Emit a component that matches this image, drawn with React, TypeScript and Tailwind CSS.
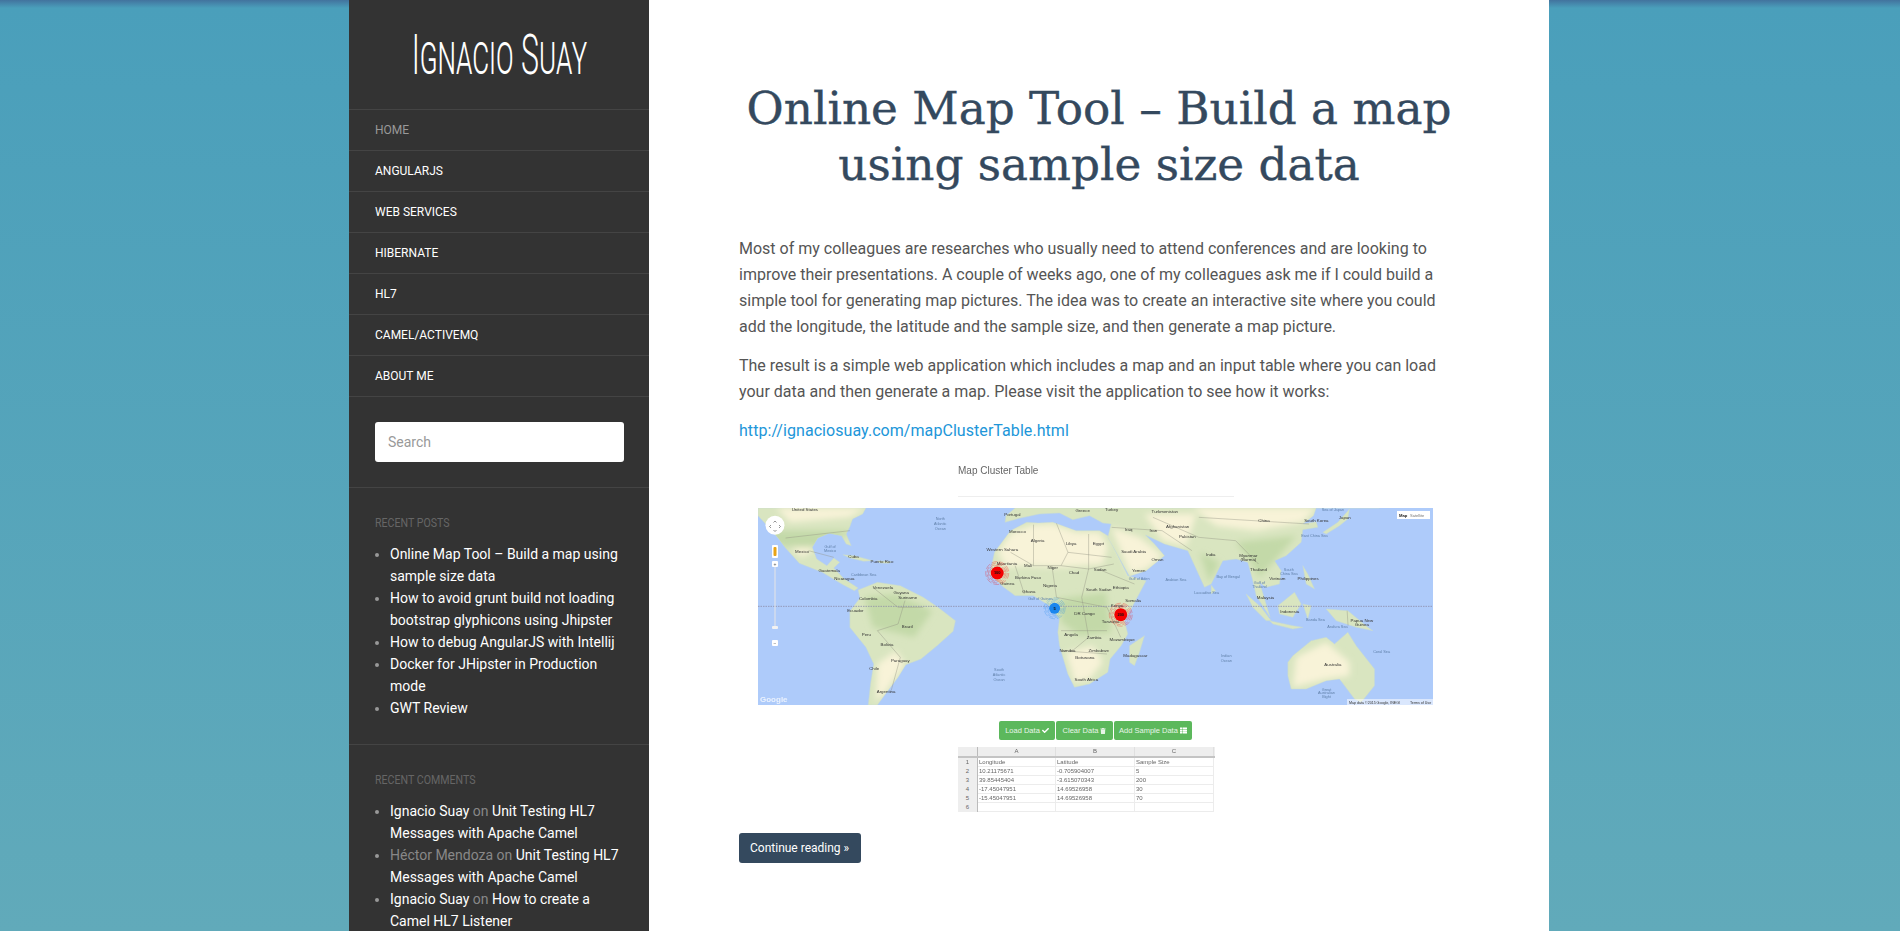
import { FaCheck, FaTrash, FaThList } from 'react-icons/fa';

const nav = ['Home', 'AngularJS', 'Web Services', 'Hibernate', 'HL7', 'Camel/ActiveMQ', 'About Me'];

const recentPosts = [
  'Online Map Tool – Build a map using sample size data',
  'How to avoid grunt build not loading bootstrap glyphicons using Jhipster',
  'How to debug AngularJS with Intellij',
  'Docker for JHipster in Production mode',
  'GWT Review',
];

const rows = [
  ['Longitude', 'Latitude', 'Sample Size'],
  ['10.21175671', '-0.705904007', '5'],
  ['39.85445404', '-3.615070343', '200'],
  ['-17.45047951', '14.69526958', '30'],
  ['-15.45047951', '14.69526958', '70'],
  ['', '', ''],
];

// map coordinates are taken from crops of the screenshot, sx/sy bring them to the drawn size
const sx = 675 / 1470;
const sy = 197 / 591;
const mx = (x: number) => (x - 40) * sx;
const my = (y: number) => (y - 172) * sy;
const pts = (p: number[][]) => p.map(([x, y]) => `${mx(x)},${my(y)}`).join(' ');
// second crop, eastern half of the map
const e = (p: number[][]) => p.map(([x, y]) => [653 + 0.726 * x, 165 + y]);

const land = [
  // north america
  [[40, 172], [275, 172], [268, 190], [246, 205], [240, 228], [232, 250], [243, 285], [232, 280], [222, 255], [195, 248], [170, 262], [158, 290], [168, 325], [190, 345], [205, 322], [218, 335], [205, 352], [228, 385], [258, 412], [250, 420], [225, 402], [180, 365], [130, 338], [100, 292], [84, 262], [62, 228], [40, 195]],
  // south america
  [[258, 418], [300, 395], [350, 405], [400, 440], [432, 470], [470, 510], [465, 542], [430, 585], [395, 625], [362, 642], [345, 680], [322, 722], [300, 763], [280, 763], [285, 700], [292, 640], [275, 590], [240, 530], [240, 482], [262, 442]],
  // africa
  [[555, 305], [590, 240], [625, 215], [650, 217], ...e([[40, 50], [110, 75], [180, 75], [205, 90], [265, 210], [320, 225], [280, 300], [255, 345], [265, 385], [245, 420], [212, 460], [205, 500], [150, 535], [105, 545], [85, 505], [60, 420], [55, 380], [60, 340], [30, 300]]), [640, 435], [600, 435], [575, 410], [545, 370]],
  // europe and asia
  [[578, 215], [580, 195], [600, 172], ...e([[400, 7], [1020, 7], [830, 7], [822, 30], [790, 55], [830, 48], [835, 65], [790, 72], [785, 110], [740, 150], [705, 165], [725, 195], [720, 235], [680, 245], [660, 230], [692, 335], [650, 270], [640, 225], [625, 170], [590, 160], [550, 165], [515, 235], [495, 245], [445, 135], [375, 115], [318, 88], [345, 115], [375, 150], [320, 195], [270, 212], [205, 95], [215, 55], [190, 52], [150, 30], [100, 42], [60, 22], [0, 25], [-60, 38]])],
  // australia
  e([[745, 470], [760, 450], [815, 405], [860, 395], [885, 415], [925, 380], [950, 420], [1005, 490], [1005, 540], [965, 590], [945, 580], [900, 520], [860, 525], [800, 550], [755, 550], [745, 510]]),
  // madagascar
  e([[315, 390], [300, 440], [285, 480], [270, 470], [270, 420]]),
  // sumatra, borneo, java, sulawesi, philippines, new guinea, japan
  e([[620, 265], [665, 305], [695, 345], [680, 345], [640, 305]]),
  e([[715, 300], [765, 260], [785, 295], [760, 335], [720, 325]]),
  e([[690, 345], [760, 360], [790, 365], [760, 370], [700, 355]]),
  e([[790, 295], [815, 300], [805, 340]]),
  e([[790, 180], [805, 205], [825, 250], [800, 235]]),
  e([[860, 310], [925, 315], [985, 365], [1000, 375], [950, 365], [890, 345]]),
  e([[850, 80], [895, 50], [930, 10], [925, 40], [900, 60], [860, 85]]),
  e([[515, 238], [528, 255], [515, 265]]),
  // cuba, hispaniola
  [[225, 312], [250, 315], [290, 330], [270, 332], [240, 322]],
  [[300, 330], [330, 333], [325, 338], [305, 337]],
];

const sandAreas = [
  [[562, 305], [592, 245], [640, 222], ...e([[40, 55], [110, 80], [180, 80], [205, 120], [190, 175], [120, 180], [50, 185], [-40, 180], [-100, 185]])],
  e([[215, 65], [300, 95], [370, 150], [320, 190], [272, 205]]),
  e([[315, 25], [470, 25], [440, 120], [370, 105]]),
  e([[460, 7], [830, 7], [790, 50], [650, 75], [530, 60]]),
  e([[770, 455], [860, 410], [930, 470], [930, 510], [860, 520], [760, 545]]),
  e([[80, 440], [160, 420], [190, 470], [150, 520], [105, 530]]),
  [[80, 172], [275, 172], [240, 200], [110, 215]],
  [[110, 290], [165, 270], [160, 300], [135, 320]],
  [[300, 640], [340, 600], [360, 640], [320, 720], [296, 755]],
];

const forest = [
  e([[55, 280], [200, 260], [215, 380], [120, 390], [65, 350]]),
  [[272, 440], [340, 430], [420, 480], [380, 560], [290, 530]],
  e([[480, 140], [540, 170], [510, 230]]),
  e([[590, 110], [770, 90], [710, 160], [660, 215], [630, 165]]),
  [[250, 345], [265, 385], [225, 380]],
  [[-20, 240], [250, 240], [170, 290], [105, 290]],
];

const borders = [
  [[590, 305], [640, 345], [700, 345], [760, 355], [815, 340]],
  [[640, 222], [640, 345]],
  [[690, 218], [715, 305], [700, 345]],
  [[760, 250], [760, 355], [745, 440], [760, 560], [725, 600]],
  [[715, 305], [810, 320]],
  [[780, 355], [860, 400]],
  [[600, 345], [620, 430]],
  [[680, 345], [690, 440]],
  [[690, 440], [800, 470], [830, 560]],
  [[700, 540], [800, 540]],
  [[700, 600], [800, 610]],
  [[360, 450], [345, 520], [300, 540], [350, 620], [330, 720]],
  [[290, 410], [345, 470], [400, 470]],
  [[100, 262], [240, 240]],
  [[150, 300], [205, 320]],
  [[810, 230], [920, 240], [985, 300]],
  [[900, 200], [1000, 260], [1080, 270], [1130, 340]],
  [[1000, 200], [1240, 220]],
  [[1323, 480], [1325, 525]],
];

const labels: [number, number, string][] = [
  [142, 176, 'United States'], [594, 190, 'Portugal'], [747, 178, 'Greece'], [810, 177, 'Turkey'], [926, 183, 'Turkmenistan'], [1142, 208, 'China'], [1256, 208, 'South Korea'], [1318, 200, 'Japan'], [605, 242, 'Morocco'], [649, 270, 'Algeria'], [722, 279, 'Libya'], [781, 279, 'Egypt'], [847, 236, 'Iraq'], [901, 240, 'Iran'], [954, 226, 'Afghanistan'], [975, 256, 'Pakistan'], [136, 302, 'Mexico'], [310, 331, 'Puerto Rico'], [248, 318, 'Cuba'], [195, 359, 'Guatemala'], [228, 384, 'Nicaragua'], [312, 410, 'Venezuela'], [352, 424, 'Guyana'], [366, 440, 'Suriname'], [280, 442, 'Colombia'], [252, 478, 'Ecuador'], [276, 550, 'Peru'], [365, 526, 'Brazil'], [321, 582, 'Bolivia'], [350, 629, 'Paraguay'], [293, 654, 'Chile'], [319, 721, 'Argentina'], [572, 297, 'Western Sahara'], [582, 338, 'Mauritania'], [628, 345, 'Mali'], [682, 349, 'Niger'], [728, 366, 'Chad'], [785, 357, 'Sudan'], [858, 301, 'Saudi Arabia'], [910, 326, 'Oman'], [869, 360, 'Yemen'], [628, 381, 'Burkina Faso'], [583, 397, 'Guinea'], [630, 421, 'Ghana'], [676, 403, 'Nigeria'], [782, 417, 'South Sudan'], [830, 410, 'Ethiopia'], [857, 449, 'Somalia'], [822, 465, 'Kenya'], [808, 511, 'Tanzania'], [751, 487, 'DR Congo'], [722, 552, 'Angola'], [772, 559, 'Zambia'], [833, 567, 'Mozambique'], [714, 600, 'Namibia'], [782, 598, 'Zimbabwe'], [752, 621, 'Botswana'], [755, 687, 'South Africa'], [862, 613, 'Madagascar'], [1026, 310, 'India'], [1108, 314, 'Myanmar'], [1108, 326, '(Burma)'], [1130, 355, 'Thailand'], [1171, 382, 'Vietnam'], [1238, 382, 'Philippines'], [1145, 441, 'Malaysia'], [1198, 481, 'Indonesia'], [1355, 508, 'Papua New'], [1355, 521, 'Guinea'], [1292, 642, 'Australia'],
];

const seaLabels: [number, number, string][] = [
  [437, 203, 'North'], [437, 219, 'Atlantic'], [437, 234, 'Ocean'], [197, 286, 'Gulf of'], [197, 298, 'Mexico'], [270, 370, 'Caribbean Sea'], [655, 443, 'Gulf of Guinea'], [565, 655, 'South'], [565, 670, 'Atlantic'], [565, 686, 'Ocean'], [1060, 613, 'Indian'], [1060, 629, 'Ocean'], [950, 385, 'Arabian Sea'], [1064, 376, 'Bay of Bengal'], [1017, 425, 'Laccadive Sea'], [870, 383, 'Gulf of Aden'], [1196, 357, 'South'], [1196, 369, 'China Sea'], [1132, 396, 'Gulf of'], [1132, 408, 'Thailand'], [1254, 507, 'Banda Sea'], [1302, 526, 'Arafura Sea'], [1398, 602, 'Coral Sea'], [1278, 715, 'Great'], [1278, 726, 'Australian'], [1278, 737, 'Bight'], [1252, 253, 'East China Sea'], [1292, 176, 'Sea of Japan'],
];

function Cluster({ x, y, r, color, text }: { x: number; y: number; r: number; color: string; text: string }) {
  return (
    <g>
      {[r + 5, r + 3.6, r + 2.2, r + 1].map((rad) => (
        <circle key={rad} cx={mx(x)} cy={my(y)} r={rad} fill="none" stroke={color} strokeWidth="0.55" opacity="0.5" strokeDasharray="6 2" />
      ))}
      <circle cx={mx(x)} cy={my(y)} r={r} fill={color} />
      <text x={mx(x)} y={my(y) + 1.4} textAnchor="middle" fontSize="4" fontWeight="700" fill="#111">
        {text}
      </text>
    </g>
  );
}

function WorldMap() {
  return (
    <svg viewBox="0 0 675 197" className="block w-[675px] h-[197px]" fontFamily="'Liberation Sans', sans-serif">
      <defs>
        <filter id="soft" x="-10%" y="-10%" width="120%" height="120%">
          <feGaussianBlur stdDeviation="3" />
        </filter>
        <clipPath id="landClip">
          {land.map((p, i) => (
            <polygon key={i} points={pts(p)} />
          ))}
        </clipPath>
      </defs>
      <rect width="675" height="197" fill="#aecbfa" />
      {land.map((p, i) => (
        <polygon key={i} points={pts(p)} fill="#d9e5c0" stroke="#c4d8d4" strokeWidth="0.5" />
      ))}
      <g clipPath="url(#landClip)">
        <g filter="url(#soft)">
          {sandAreas.map((p, i) => (
            <polygon key={i} points={pts(p)} fill="#f8f3d8" />
          ))}
          {forest.map((p, i) => (
            <polygon key={i} points={pts(p)} fill="#c3d9a8" />
          ))}
        </g>
      </g>
      {borders.map((p, i) => (
        <polyline key={i} points={pts(p)} fill="none" stroke="#8f8f80" strokeWidth="0.4" />
      ))}
      <line x1="0" x2="675" y1={my(467)} y2={my(467)} stroke="#8d8ca8" strokeWidth="0.8" strokeDasharray="1.5 1" />
      {labels.map(([x, y, t]) => (
        <text key={t + x} x={mx(x)} y={my(y) + 1.5} textAnchor="middle" fontSize="4.4" fill="#333">
          {t}
        </text>
      ))}
      {seaLabels.map(([x, y, t]) => (
        <text key={t + x} x={mx(x)} y={my(y) + 1.5} textAnchor="middle" fontSize="3.8" fill="#5f7fa8">
          {t}
        </text>
      ))}
      <Cluster x={561} y={367} r={6.5} color="#f40000" text="100" />
      <Cluster x={830} y={492} r={6.5} color="#f40000" text="200" />
      <Cluster x={686} y={473} r={5.5} color="#1a86ee" text="5" />
      {/* map controls */}
      <circle cx={mx(77)} cy={my(224)} r="9.5" fill="#fff" />
      <path d="M15.5 14.5l1.5-1.5 1.5 1.5M15.5 22l1.5 1.5 1.5-1.5M13 17l-1.5 1.5 1.5 1.5M21 17l1.5 1.5-1.5 1.5" fill="none" stroke="#666" strokeWidth="0.7" />
      <rect x="14" y="37" width="6" height="13" rx="1" fill="#fff" />
      <rect x="15.5" y="39" width="3" height="9" rx="1" fill="#e8a317" />
      <rect x="14" y="53" width="6" height="6" rx="1" fill="#fff" />
      <rect x="16.5" y="59" width="1" height="62" fill="#e6e6e6" />
      <rect x="14" y="118" width="6" height="3" rx="1" fill="#f2f2f2" />
      <rect x="14" y="132" width="6" height="6" rx="1" fill="#fff" />
      <text x="17" y="58" textAnchor="middle" fontSize="5" fill="#555">+</text>
      <text x="17" y="137" textAnchor="middle" fontSize="5" fill="#555">−</text>
      <rect x="639" y="3" width="33" height="8" fill="#fff" />
      <text x="641" y="9" fontSize="4.2" fontWeight="700" fill="#222">Map</text>
      <text x="652" y="9" fontSize="4" fill="#777">Satellite</text>
      <text x="2" y="194" fontSize="8" fontWeight="700" fill="#ffffff" opacity="0.75">Google</text>
      <rect x="589" y="191" width="86" height="6" fill="#fff" opacity="0.55" />
      <text x="591" y="195.5" fontSize="3.6" fill="#333">Map data ©2015 Google, INEGI</text>
      <text x="652" y="195.5" fontSize="3.6" fill="#333">Terms of Use</text>
    </svg>
  );
}

function Figure() {
  return (
    <div className="flex flex-col h-[352px] w-[675px] mb-[20px] text-[#555] font-['Liberation_Sans',sans-serif] blur-[0.4px]">
      <div className="pl-[200px] h-[47px]">
        <div className="text-[10px] leading-[20px] text-[#666]">Map Cluster Table</div>
        <div className="mt-[15px] w-[276px] border-t border-[#eee]" />
      </div>
      <WorldMap />
      <div className="mt-[16px] ml-[241px] flex gap-[1px] text-[7.5px] leading-[18px] text-[#e8f5e8]">
        <div className="w-[56px] h-[19px] bg-[#5cb85c] rounded-[2px] flex items-center justify-center gap-[2px]">
          Load Data <FaCheck className="w-[7px] h-[7px] text-white" />
        </div>
        <div className="w-[57px] h-[19px] bg-[#5cb85c] rounded-[2px] flex items-center justify-center gap-[2px]">
          Clear Data <FaTrash className="w-[6px] h-[6px]" />
        </div>
        <div className="w-[78px] h-[19px] bg-[#5cb85c] rounded-[2px] flex items-center justify-center gap-[2px]">
          Add Sample Data <FaThList className="w-[7px] h-[7px] text-white" />
        </div>
      </div>
      <div className="mt-[7px] ml-[200px] w-[257px] text-[6px] leading-[9px] text-[#666]">
        <div className="grid grid-cols-[20px_78px_79px_79px] h-[11px] bg-[#eee] border-b-2 border-[#c4c4c4] text-center">
          <div className="border-r border-[#bbb]" />
          <div className="border-r border-[#e0e0e0]">A</div>
          <div className="border-r border-[#e0e0e0]">B</div>
          <div className="border-r border-[#e0e0e0]">C</div>
        </div>
        {rows.map((row, i) => (
          <div key={i} className="grid grid-cols-[20px_78px_79px_79px] h-[9px]">
            <div className="bg-[#eee] text-center border-r border-[#bbb]">{i + 1}</div>
            {row.map((cell, j) => (
              <div key={j} className="border-r border-b border-[#ececec] pl-[1px] overflow-hidden whitespace-nowrap">
                {cell}
              </div>
            ))}
          </div>
        ))}
      </div>
    </div>
  );
}

function SideTitle({ children }: { children: string }) {
  return (
    <h4 className="text-[12.5px] leading-[18px] uppercase text-[#666] origin-left scale-x-[0.85] whitespace-nowrap">{children}</h4>
  );
}

function Sidebar() {
  return (
    <aside className="w-[300px] shrink-0 bg-[#333] text-white font-['Roboto',sans-serif]">
      <div className="h-[109px] flex items-center justify-center overflow-hidden">
        <h1 className="inline-block whitespace-nowrap text-[56px] leading-none font-light [font-variant:small-caps] scale-x-[0.54] text-white">
          Ignacio Suay
        </h1>
      </div>
      <nav className="border-b border-[#444]">
        {nav.map((item, i) => (
          <a
            key={item}
            className={`flex items-center h-[41px] px-[26px] border-t border-[#444] text-[12px] uppercase ${i === 0 ? 'text-[#999]' : 'text-white'}`}
          >
            {item}
          </a>
        ))}
      </nav>
      <div className="pl-[26px] pr-[25px] py-[25px] border-b border-[#444]">
        <div className="h-[40px] bg-white rounded-[3px] flex items-center px-[13px] text-[14px] text-[#999]">Search</div>
      </div>
      <section className="pl-[26px] pr-[25px] pt-[26px] pb-[25px] border-b border-[#444]">
        <SideTitle>Recent Posts</SideTitle>
        <ul className="mt-[11px] text-[14px] leading-[22px] list-disc pl-[15px] marker:text-[#999]">
          {recentPosts.map((post) => (
            <li key={post}>{post}</li>
          ))}
        </ul>
      </section>
      <section className="pl-[26px] pr-[25px] pt-[26px]">
        <SideTitle>Recent Comments</SideTitle>
        <ul className="mt-[11px] text-[14px] leading-[22px] list-disc pl-[15px] marker:text-[#999] text-[#888]">
          <li>
            <span className="text-white">Ignacio Suay</span> on <span className="text-white">Unit Testing HL7 Messages with Apache Camel</span>
          </li>
          <li>
            Héctor Mendoza on <span className="text-white">Unit Testing HL7 Messages with Apache Camel</span>
          </li>
          <li>
            <span className="text-white">Ignacio Suay</span> on <span className="text-white">How to create a Camel HL7 Listener</span>
          </li>
        </ul>
      </section>
    </aside>
  );
}

export default function App() {
  return (
    <div className="h-screen overflow-hidden flex justify-center pr-[2px] bg-[linear-gradient(#42739e_0,#4a9fbb_8px,#61aaba_100%)]">
      <Sidebar />
      <main className="w-[900px] shrink-0 bg-white px-[90px] pt-[81px] font-['Roboto',sans-serif] text-[16px] leading-[26px] text-[#555]">
        <h2 className="text-center font-['DejaVu_Serif',serif] text-[45.3px] leading-[56px] text-[#34495e] [-webkit-text-stroke:0.4px_#34495e] mb-[43px]">
          Online Map Tool – Build a map using sample size data
        </h2>
        <p className="mb-[13px]">
          Most of my colleagues are researches who usually need to attend conferences and are looking to improve their presentations. A couple of weeks ago, one of my colleagues ask me if I could build a simple tool for generating map pictures. The idea was to create an interactive site where you could add the longitude, the latitude and the sample size, and then generate a map picture.
        </p>
        <p className="mb-[13px]">
          The result is a simple web application which includes a map and an input table where you can load your data and then generate a map. Please visit the application to see how it works:
        </p>
        <p className="mb-[17px]">
          <a className="text-[#2196d9] tracking-[0.06px]">http://ignaciosuay.com/mapClusterTable.html</a>
        </p>
        <div className="pl-[19px]">
          <Figure />
        </div>
        <a className="inline-flex items-center h-[30px] pl-[11px] pr-[12px] bg-[#34495e] text-white text-[12px] rounded-[3px]">Continue reading »</a>
      </main>
    </div>
  );
}
